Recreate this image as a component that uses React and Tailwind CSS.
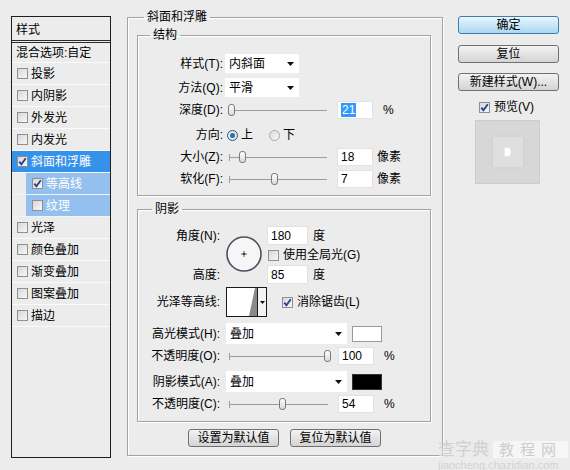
import React from 'react';

const sideItems = [
  { label: '投影' },
  { label: '内阴影' },
  { label: '外发光' },
  { label: '内发光' },
  { label: '斜面和浮雕', checked: true, tone: 'active' },
  { label: '等高线', checked: true, tone: 'sub' },
  { label: '纹理', tone: 'sub' },
  { label: '光泽' },
  { label: '颜色叠加' },
  { label: '渐变叠加' },
  { label: '图案叠加' },
  { label: '描边' },
];

function Check({ checked }) {
  return (
    <span className="inline-flex h-[11px] w-[11px] shrink-0 items-center justify-center border border-[#8e8f8f] bg-gradient-to-br from-[#d8d8d8] to-[#f7f7f7]">
      {checked && (
        <svg width="9" height="9" viewBox="0 0 9 9">
          <path d="M1.3 4.6 L3.4 7.2 L7.8 1.2" stroke="#21408c" strokeWidth="1.8" fill="none" />
        </svg>
      )}
    </span>
  );
}

function Radio({ on }) {
  return on ? (
    <span className="inline-flex h-[11px] w-[11px] items-center justify-center rounded-full border border-[#2a5680] bg-[#dfeaf4]">
      <span className="h-[5px] w-[5px] rounded-full bg-[#2f6fa8]" />
    </span>
  ) : (
    <span className="inline-block h-[11px] w-[11px] rounded-full border border-[#a8a8a8] bg-gradient-to-br from-[#dcdcdc] to-[#f8f8f8]" />
  );
}

function Slider({ width, pos, className = '' }) {
  return (
    <div className={`relative h-[14px] shrink-0 ${className}`} style={{ width }}>
      <div className="absolute left-0 right-0 top-[7px] h-px bg-[#9c9c9c]" />
      <div className="absolute left-0 top-[4px] h-[7px] w-px bg-[#9c9c9c]" />
      <div
        className="absolute top-px h-[12px] w-[7px] rounded-[3px] border border-[#7a7a7a] bg-gradient-to-b from-white to-[#d9d9d9]"
        style={{ left: pos }}
      />
    </div>
  );
}

function Field({ value, selected, w = 'w-[36px]', h = 'h-[18px]', className = '' }) {
  return (
    <div className={`flex shrink-0 items-center border border-[#e2e2e2] bg-white pl-[3px] ${w} ${h} ${className}`}>
      {selected ? <span className="bg-[#3399ff] px-px text-white">{value}</span> : <span>{value}</span>}
    </div>
  );
}

function Select({ value, w, h = 'h-[19px]', className = '' }) {
  return (
    <div className={`flex shrink-0 items-center justify-between bg-white pl-[4px] pr-[5px] ${w} ${h} ${className}`}>
      <span>{value}</span>
      <svg width="7" height="4" viewBox="0 0 7 4">
        <path d="M0 0 H7 L3.5 4 Z" fill="#111" />
      </svg>
    </div>
  );
}

function Btn({ children, primary, className = '' }) {
  const tone = primary
    ? 'border-[#3c7fb1] from-[#e9f5fc] to-[#a9d8f3]'
    : 'border-[#707070] from-[#f3f3f3] to-[#d4d4d4]';
  return (
    <div className={`flex h-[18px] items-center justify-center rounded-[3px] border bg-gradient-to-b ${tone} ${className}`}>
      {children}
    </div>
  );
}

function SidePanel() {
  return (
    <div className="ml-[11px] mt-[16px] flex h-[442px] w-[100px] shrink-0 flex-col border border-[#1e1e1e] bg-[#ececec]">
      <div className="flex h-[23px] items-center pl-[4px] pt-[3px]">样式</div>
      <div className="h-[3px] border-y border-[#2a2a2a]" />
      <div className="flex h-[20px] items-center border-b border-[#fafafa] pl-[4px]">混合选项:自定</div>
      {sideItems.map((it) => {
        if (it.tone === 'sub') {
          return (
            <div key={it.label} className="flex h-[22px] border-b border-[#f4f4f4]">
              <div className="ml-[14px] flex flex-1 items-center gap-[3px] bg-[#93c0ee] pl-[6px] text-white">
                <Check checked={it.checked} />
                <span>{it.label}</span>
              </div>
            </div>
          );
        }
        const bg = it.tone === 'active' ? 'bg-[#3592ea] text-white' : '';
        return (
          <div key={it.label} className={`flex h-[22px] items-center gap-[3px] border-b border-[#fafafa] pl-[5px] ${bg}`}>
            <Check checked={it.checked} />
            <span>{it.label}</span>
          </div>
        );
      })}
    </div>
  );
}

function Dial() {
  return (
    <svg width="36" height="36" viewBox="0 0 36 36" className="ml-[6px] mt-[10px] shrink-0">
      <circle cx="18" cy="18" r="17" fill="#f6f6f6" stroke="#4b505d" strokeWidth="1.6" />
      <path d="M18 15 V21 M15 18 H21" stroke="#333" strokeWidth="0.8" />
      <circle cx="18" cy="18" r="1" fill="#222" />
    </svg>
  );
}

function Contour() {
  return (
    <div className="ml-[6px] flex h-[30px] w-[41px] shrink-0 border border-[#1a1a1a] bg-white">
      <svg width="30" height="28" viewBox="0 0 30 28">
        <polygon points="28,0 30,0 30,28 22,28" fill="#8a8a8a" />
      </svg>
      <div className="flex flex-1 items-center justify-center border-l border-[#1a1a1a] bg-[#f4f4f4]">
        <svg width="5" height="3" viewBox="0 0 5 3">
          <path d="M0 0 H5 L2.5 3 Z" fill="#111" />
        </svg>
      </div>
    </div>
  );
}

function Legend({ children, className }) {
  return <legend className={`px-[3px] leading-[14px] ${className}`}>{children}</legend>;
}

const groupLine = 'border border-[#a3a3a3] shadow-[1px_1px_0_#fff,inset_1px_1px_0_#fff]';

function MainGroup() {
  return (
    <fieldset className={`ml-[16px] mt-[10px] w-[316px] shrink-0 pb-[8px] ${groupLine}`}>
      <Legend className="ml-[16px]">斜面和浮雕</Legend>

      <fieldset className={`ml-[9px] mt-[4px] w-[294px] pb-[7px] pt-[12px] ${groupLine}`}>
        <Legend className="ml-[12px]">结构</Legend>
        <div className="flex h-[19px] items-center">
          <div className="w-[85px] text-right">样式(T):</div>
          <Select value="内斜面" w="w-[74px]" className="ml-[2px]" />
        </div>
        <div className="mt-[5px] flex h-[19px] items-center">
          <div className="w-[85px] text-right">方法(Q):</div>
          <Select value="平滑" w="w-[74px]" className="ml-[2px]" />
        </div>
        <div className="mt-[4px] flex h-[18px] items-center">
          <div className="w-[85px] text-right">深度(D):</div>
          <Slider width={99} pos={0} className="ml-[5px]" />
          <Field value="21" selected className="ml-[10px]" />
          <span className="ml-[10px]">%</span>
        </div>
        <div className="mt-[7px] flex h-[18px] items-center">
          <div className="w-[85px] text-right">方向:</div>
          <span className="ml-[4px] flex items-center"><Radio on /></span>
          <span className="ml-[3px]">上</span>
          <span className="ml-[16px] flex items-center"><Radio /></span>
          <span className="ml-[3px]">下</span>
        </div>
        <div className="mt-[4px] flex h-[18px] items-center">
          <div className="w-[85px] text-right">大小(Z):</div>
          <Slider width={98} pos={10} className="ml-[6px]" />
          <Field value="18" className="ml-[10px]" />
          <span className="ml-[4px]">像素</span>
        </div>
        <div className="mt-[4px] flex h-[18px] items-center">
          <div className="w-[85px] text-right">软化(F):</div>
          <Slider width={98} pos={42} className="ml-[6px]" />
          <Field value="7" className="ml-[10px]" />
          <span className="ml-[4px]">像素</span>
        </div>
      </fieldset>

      <fieldset className={`ml-[9px] mt-[6px] w-[294px] pb-[8px] pt-[10px] ${groupLine}`}>
        <Legend className="ml-[14px]">阴影</Legend>
        <div className="flex">
          <div className="flex w-[82px] shrink-0 flex-col text-right">
            <div className="flex h-[19px] items-center justify-end">角度(N):</div>
            <div className="h-[20px]" />
            <div className="flex h-[19px] items-center justify-end">高度:</div>
          </div>
          <Dial />
          <div className="ml-[5px] flex flex-col">
            <div className="flex h-[19px] items-center">
              <Field value="180" w="w-[41px]" h="h-[19px]" />
              <span className="ml-[5px]">度</span>
            </div>
            <div className="flex h-[20px] items-center">
              <span className="ml-px flex"><Check /></span>
              <span className="ml-[4px]">使用全局光(G)</span>
            </div>
            <div className="flex h-[19px] items-center">
              <Field value="85" w="w-[41px]" h="h-[19px]" />
              <span className="ml-[5px]">度</span>
            </div>
          </div>
        </div>
        <div className="mt-[3px] flex h-[30px] items-center">
          <div className="w-[82px] text-right">光泽等高线:</div>
          <Contour />
          <span className="ml-[15px] flex"><Check checked /></span>
          <span className="ml-[4px]">消除锯齿(L)</span>
        </div>
        <div className="mt-[6px] flex h-[21px] items-center">
          <div className="w-[82px] text-right">高光模式(H):</div>
          <Select value="叠加" w="w-[121px]" h="h-[21px]" className="ml-[6px]" />
          <div className="ml-[5px] h-[16px] w-[30px] border border-[#9a9a9a] bg-white" />
        </div>
        <div className="mt-[3px] flex h-[18px] items-center">
          <div className="w-[82px] text-right">不透明度(O):</div>
          <Slider width={102} pos={95} className="ml-[9px]" />
          <Field value="100" className="ml-[7px]" />
          <span className="ml-[10px]">%</span>
        </div>
        <div className="mt-[6px] flex h-[21px] items-center">
          <div className="w-[82px] text-right">阴影模式(A):</div>
          <Select value="叠加" w="w-[121px]" h="h-[21px]" className="ml-[6px]" />
          <div className="ml-[5px] h-[16px] w-[30px] border border-[#333] bg-black" />
        </div>
        <div className="mt-[3px] flex h-[18px] items-center">
          <div className="w-[82px] text-right">不透明度(C):</div>
          <Slider width={99} pos={50} className="ml-[9px]" />
          <Field value="54" className="ml-[10px]" />
          <span className="ml-[10px]">%</span>
        </div>
      </fieldset>

      <div className="mt-[7px] flex gap-[11px] pl-[60px]">
        <Btn className="w-[91px]">设置为默认值</Btn>
        <Btn className="w-[91px]">复位为默认值</Btn>
      </div>
    </fieldset>
  );
}

function SideButtons() {
  return (
    <div className="ml-[15px] mt-[16px] flex w-[101px] shrink-0 flex-col">
      <Btn primary>确定</Btn>
      <Btn className="mt-[11px]">复位</Btn>
      <Btn className="mt-[10px]">新建样式(W)...</Btn>
      <div className="mt-[9px] flex h-[14px] items-center justify-center gap-[4px] pr-[4px]">
        <Check checked />
        <span>预览(V)</span>
      </div>
      <div className="ml-[17px] mt-[6px] flex h-[64px] w-[65px] items-center justify-center border border-[#cdcdcd] bg-[#d7d7d7]">
        <div className="flex h-[30px] w-[30px] items-center justify-center bg-[#dedede] shadow-[0_0_4px_#cfcfcf]">
          <div className="h-[8px] w-[5px] rounded-r-[3px] bg-white shadow-[0_0_3px_#fff]" />
        </div>
      </div>
    </div>
  );
}

export default function App() {
  return (
    <div className="relative flex h-[470px] w-[570px] items-start overflow-hidden bg-[#ececec] font-['Liberation_Sans','Noto_Sans_CJK_SC',sans-serif] text-[12px] leading-[14px] text-black">
      <SidePanel />
      <MainGroup />
      <SideButtons />
      <div className="pointer-events-none absolute left-[438px] top-[440px] flex flex-col items-start">
        <div className="flex items-center gap-[4px]">
          <span className="text-[17px] leading-[19px] text-[#d0d0d0]">查字典</span>
          <span className="bg-[#f6f6f6] px-[6px] text-[15px] leading-[17px] tracking-[6px] text-[#cdcdcd]">教程网</span>
        </div>
        <span className="text-[11px] leading-[12px] text-[#d2d2d2]">jiaocheng.chazidian.com</span>
      </div>
    </div>
  );
}
